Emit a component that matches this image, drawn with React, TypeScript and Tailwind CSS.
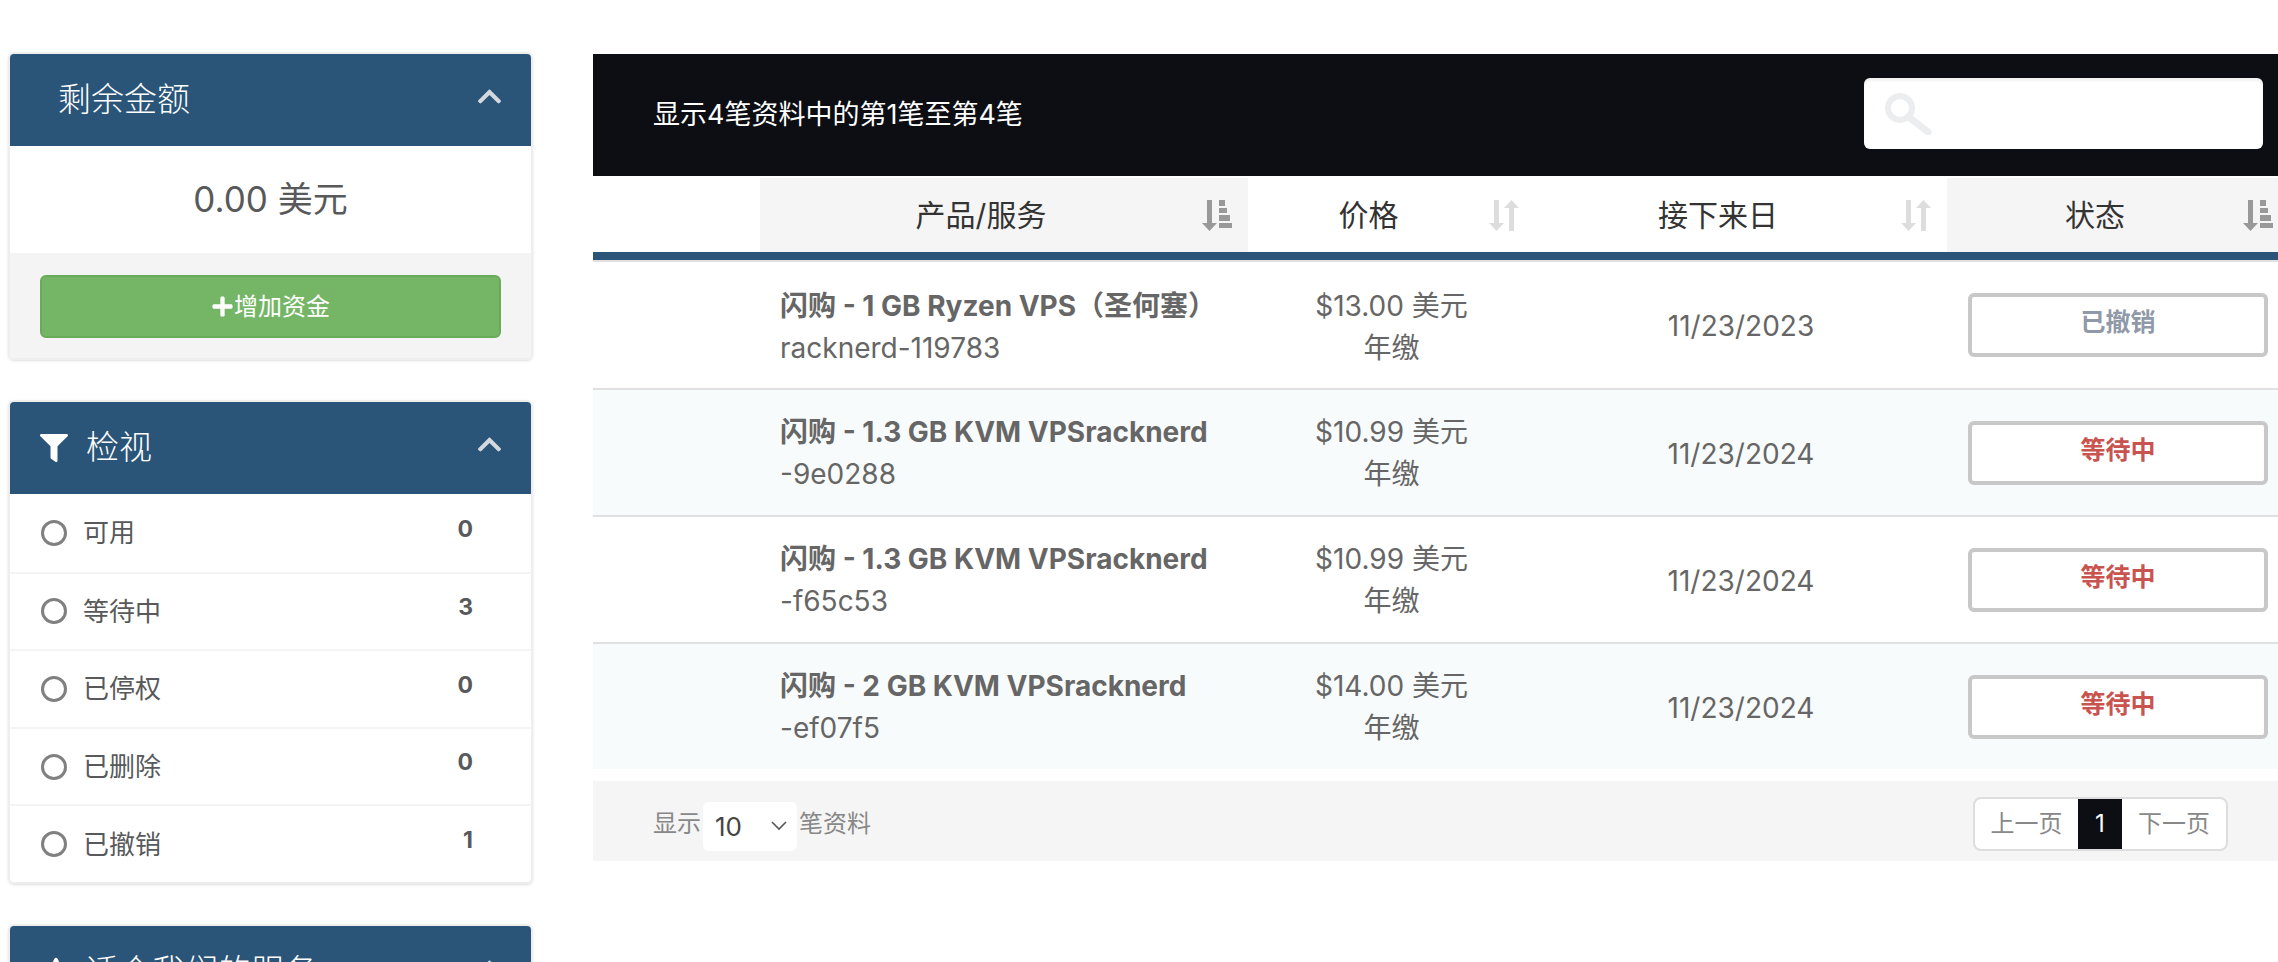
import { FaChevronUp, FaFilter, FaPlus, FaStar } from "react-icons/fa"
import { ReactNode } from "react"

const fontStack = { fontFamily: "Inter, 'Noto Sans CJK SC', sans-serif" }

function SortActive() {
  return (
    <svg viewBox="0 0 30 31" className="w-[30px] h-[31px] shrink-0 text-[#999]" fill="currentColor">
      <path d="M5 0h5v23h5l-7.5 8-7.5-8h5z" />
      <rect x="17" y="0" width="6" height="6" />
      <rect x="17" y="8" width="8" height="5" />
      <rect x="17" y="15" width="11" height="6" />
      <rect x="17" y="23" width="13" height="5" />
    </svg>
  )
}

function SortIdle() {
  return (
    <svg viewBox="0 0 30 31" className="w-[30px] h-[31px] shrink-0 text-[#ddd]" fill="currentColor">
      <path d="M5 0h5v23h5l-7.5 8-7.5-8h5z" />
      <path d="M20 31h5V8h5L22.5 0 15 8h5z" />
    </svg>
  )
}

function Panel({ title, icon, children }: { title: string; icon?: ReactNode; children?: ReactNode }) {
  return (
    <div className="border-2 border-[#eeeeee] rounded-md overflow-hidden shadow-sm">
      <div className="h-[92px] bg-[#2a5579] flex items-center justify-between pl-[30px] pr-[28px] text-white">
        <div className="flex items-center gap-[18px] text-[33px] font-light">
          {icon ?? <span />}
          <span>{title}</span>
        </div>
        <FaChevronUp className="text-[#d5d9dd] text-[27px] -mt-[8px]" />
      </div>
      {children}
    </div>
  )
}

const filters = [
  { label: "可用", count: 0 },
  { label: "等待中", count: 3 },
  { label: "已停权", count: 0 },
  { label: "已删除", count: 0 },
  { label: "已撤销", count: 1 },
]

const services = [
  { title: "闪购 - 1 GB Ryzen VPS（圣何塞）", sub: "racknerd-119783", price: "$13.00 美元", date: "11/23/2023", status: "已撤销", tone: "text-[#8f99a8]", striped: false },
  { title: "闪购 - 1.3 GB KVM VPSracknerd", sub: "-9e0288", price: "$10.99 美元", date: "11/23/2024", status: "等待中", tone: "text-[#c9534f]", striped: true },
  { title: "闪购 - 1.3 GB KVM VPSracknerd", sub: "-f65c53", price: "$10.99 美元", date: "11/23/2024", status: "等待中", tone: "text-[#c9534f]", striped: false },
  { title: "闪购 - 2 GB KVM VPSracknerd", sub: "-ef07f5", price: "$14.00 美元", date: "11/23/2024", status: "等待中", tone: "text-[#c9534f]", striped: true },
]

function HeadCell({ label, width, active }: { label: string; width: string; active?: boolean }) {
  return (
    <div className={`${width} ${active ? "bg-[#f5f5f5]" : ""} shrink-0 flex items-center pr-[16px] text-[30px] text-[#333]`}>
      <span className="flex-1 text-center">{label}</span>
      {active ? <SortActive /> : <SortIdle />}
    </div>
  )
}

export default function App() {
  return (
    <div style={fontStack} className="w-[2278px] h-[962px] overflow-hidden bg-white flex items-start pl-[8px]">
      {/* sidebar */}
      <div className="w-[525px] pt-[52px] shrink-0 flex flex-col gap-[40px] text-[#58595b]">
        <Panel title="剩余金额">
          <div className="h-[107px] flex items-center justify-center text-[35px]">0.00 美元</div>
          <div className="h-[105px] bg-[#f4f4f4] px-[30px] pt-[22px]">
            <button className="w-full h-[63px] rounded-md bg-[#75b666] border-2 border-[#6aab5b] text-white text-[24px] flex items-center justify-center">
              <FaPlus className="text-[23px]" />
              增加资金
            </button>
          </div>
        </Panel>
        <Panel title="检视" icon={<FaFilter className="text-[28px]" />}>
          {filters.map((f, i) => (
            <div key={f.label} className={`h-[77.6px] flex items-center justify-between pl-[31px] pr-[58px] ${i > 0 ? "border-t-2 border-[#f4f4f4]" : ""}`}>
              <div className="flex items-center gap-[16px] text-[26px]">
                <span className="w-[26px] h-[26px] rounded-full border-[3px] border-[#808080]" />
                {f.label}
              </div>
              <span className="text-[23px] font-bold -mt-[8px]">{f.count}</span>
            </div>
          ))}
        </Panel>
        <Panel title="适合我们的服务" icon={<FaStar className="w-[32px] h-[32px] -mr-[4px]" />} />
      </div>

      {/* main */}
      <div className="ml-[60px] mt-[54px] w-[1696px] shrink-0 text-[#666]">
        <div className="h-[122px] bg-[#0c0e13] flex items-center justify-between pl-[60px] pr-[26px] text-white text-[27px]">
          <span>显示4笔资料中的第1笔至第4笔</span>
          <div className="w-[399px] h-[71px] -mt-[3px] bg-white rounded-md pl-[20px] flex items-center shadow-[inset_0_3px_2px_rgba(0,0,0,0.05)]">
            <svg viewBox="0 0 50 42" className="w-[50px] h-[42px]" fill="none" stroke="#ebedef">
              <circle cx="16" cy="15" r="12" strokeWidth="6" />
              <path d="M26 25l18 14" strokeWidth="7" strokeLinecap="round" />
            </svg>
          </div>
        </div>

        <div className="h-[74px] mt-[2px] flex items-stretch">
          <div className="w-[167px] shrink-0" />
          <HeadCell label="产品/服务" width="w-[488px]" active />
          <HeadCell label="价格" width="w-[287px]" />
          <HeadCell label="接下来日" width="w-[412px]" />
          <HeadCell label="状态" width="w-[342px]" active />
        </div>
        <div className="h-[8px] bg-[#2a5579]" />

        {services.map((s, i) => (
          <div key={s.sub} className={`${i === 0 ? "h-[128px]" : "h-[127px]"} flex items-center text-[28px] border-t-2 border-[#e0e0e0] ${s.striped ? "bg-[#f8fbfc]" : "bg-white"}`}>
            <div className="w-[167px] shrink-0" />
            <div className={`w-[488px] shrink-0 px-[20px] leading-[42px] ${i === 0 ? "pt-[3px]" : ""}`}>
              <div className="font-bold whitespace-nowrap">{s.title}</div>
              <div>{s.sub}</div>
            </div>
            <div className={`w-[287px] shrink-0 text-center leading-[42px] ${i === 0 ? "pt-[3px]" : ""}`}>
              <div>{s.price}</div>
              <div>年缴</div>
            </div>
            <div className="w-[412px] shrink-0 text-center pt-[2px]">{s.date}</div>
            <div className="w-[342px] shrink-0 pl-[21px] pr-[21px]">
              <div className={`h-[64px] bg-white border-4 border-[#c8c8c8] rounded-md flex items-center justify-center text-[25px] font-bold pb-[4px] ${s.tone}`}>
                {s.status}
              </div>
            </div>
          </div>
        ))}

        <div className="h-[80px] mt-[12px] bg-[#f5f5f5] flex items-center justify-between pl-[60px] pr-[61px] pt-[6px] text-[24px] text-[#888]">
          <div className="flex items-center">
            显示
            <div className="w-[94px] h-[49px] mt-[4px] mx-[2px] bg-white rounded-md flex items-center justify-between pl-[12px] pr-[10px] text-[#444] text-[26px]">
              10
              <svg viewBox="0 0 16 10" className="w-[16px] h-[10px]" fill="none" stroke="#555" strokeWidth="1.6">
                <path d="M1 1l7 7 7-7" />
              </svg>
            </div>
            笔资料
          </div>
          <div className="h-[54px] flex items-stretch bg-white border-2 border-[#dddddd] rounded-lg overflow-hidden">
            <span className="w-[103px] flex items-center justify-center">上一页</span>
            <span className="w-[44px] bg-[#0c0e13] text-white flex items-center justify-center">1</span>
            <span className="w-[104px] flex items-center justify-center">下一页</span>
          </div>
        </div>
      </div>
    </div>
  )
}
